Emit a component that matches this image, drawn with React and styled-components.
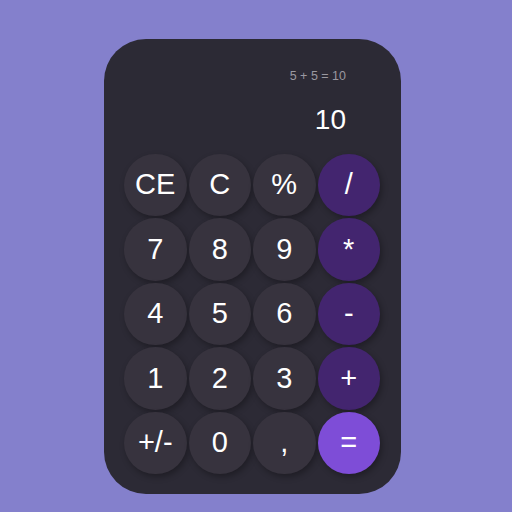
import React, { Fragment } from "react";
import styled, { createGlobalStyle } from "styled-components";

const GlobalStyles = createGlobalStyle`
  html, body {
    margin: 0;
    padding: 0;
    background-color: #8480cc;
    font-family: "Liberation Sans", Arial, sans-serif;
  }
`;

const keys = [
  { label: "CE" },
  { label: "C" },
  { label: "%" },
  { label: "/", kind: "op" },
  { label: "7" },
  { label: "8" },
  { label: "9" },
  { label: "*", kind: "op" },
  { label: "4" },
  { label: "5" },
  { label: "6" },
  { label: "-", kind: "op" },
  { label: "1" },
  { label: "2" },
  { label: "3" },
  { label: "+", kind: "op" },
  { label: "+/-" },
  { label: "0" },
  { label: "," },
  { label: "=", kind: "equals" },
];

const App = () => {
  return (
    <Fragment>
      <GlobalStyles />
      <Page>
        <Card>
          <Display>
            <History>5 + 5 = 10</History>
            <Result>10</Result>
          </Display>
          <Keypad>
            {keys.map((k) => (
              <Key key={k.label} kind={k.kind}>
                {k.label}
              </Key>
            ))}
          </Keypad>
        </Card>
      </Page>
    </Fragment>
  );
};
export default App;

const Page = styled.div`
  width: 512px;
  height: 512px;
  box-sizing: border-box;
  padding: 39px 0 0 104px;
  display: flex;
  align-items: flex-start;
`;

const Card = styled.div`
  width: 297px;
  height: 455px;
  box-sizing: border-box;
  padding: 20px 21px 20px 20px;
  border-radius: 42px;
  background-color: #2c2a35;
  display: flex;
  flex-direction: column;
`;

const Display = styled.div`
  height: 95px;
  display: flex;
  flex-direction: column;
  align-items: flex-end;
  padding-right: 34px;
`;

const History = styled.div`
  margin-top: 11px;
  font-size: 12.5px;
  line-height: 1;
  color: #9a98a0;
`;

const Result = styled.div`
  margin-top: 23.5px;
  font-size: 28px;
  line-height: 1;
  color: #ffffff;
`;

const Keypad = styled.div`
  display: grid;
  grid-template-columns: repeat(4, 62.5px);
  grid-auto-rows: 62.5px;
  gap: 2px;
`;

const Key = styled.button`
  border: none;
  padding: 0;
  border-radius: 50%;
  font-family: "Liberation Sans", Arial, sans-serif;
  font-size: 29px;
  color: #ffffff;
  display: flex;
  align-items: center;
  justify-content: center;
  box-shadow: 2px 3px 6px rgba(0, 0, 0, 0.3);
  background-color: ${(p) =>
    p.kind === "op" ? "#43256f" : p.kind === "equals" ? "#7e4dd7" : "#37333e"};
`;
